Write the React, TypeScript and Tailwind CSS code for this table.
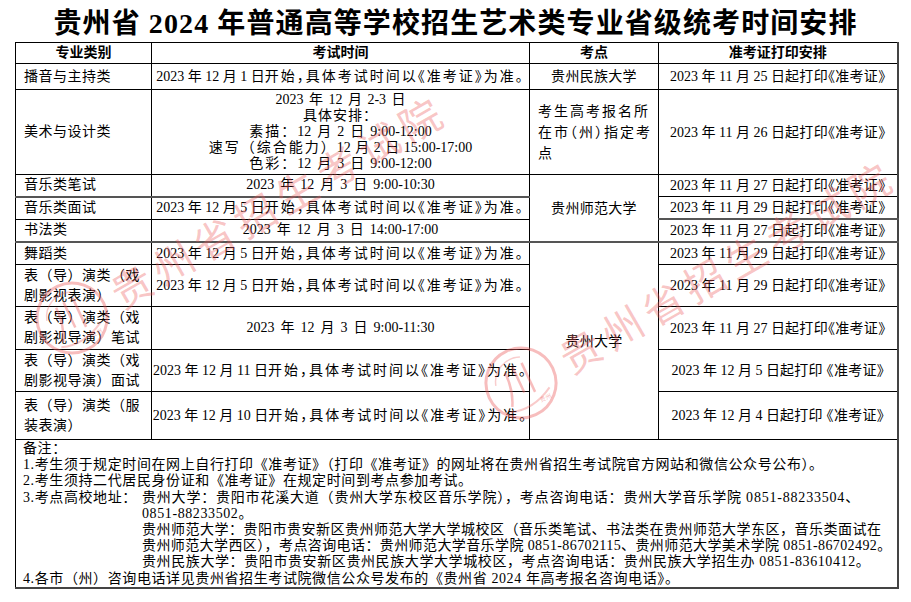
import React from "react";

const c1 = "border border-black px-[8px] text-left align-middle tracking-[0.5px] leading-[20px]";
const c2 = "border border-black px-0 text-center align-middle whitespace-nowrap leading-[16px]";
const c3 = "border border-black px-[8px] text-center align-middle tracking-[0.3px] leading-[21px]";
const c4 = "border border-black px-0 text-center align-middle whitespace-nowrap [font-feature-settings:'halt']";
const th = "border border-black text-center align-middle font-bold text-[14px] leading-[20px]";

function Long({ d }: { d: string }) {
  return (
    <span className="[font-feature-settings:'halt']">
      {d}
      <span className="tracking-[2px]">开始，具体考试时间以《准考证》为准。</span>
    </span>
  );
}

function P4({ d, sp }: { d: string; sp?: boolean }) {
  return (
    <span>
      {d}
      <span className="tracking-[0.3px]">{sp ? "起打印 《准考证》" : "起打印《准考证》"}</span>
    </span>
  );
}

function Watermark({ x, y }: { x: number; y: number }) {
  const red = "rgb(236,90,90)";
  return (
    <g>
      <g transform={`translate(${x - 41} ${y + 23}) rotate(-25)`}>
        <circle r="35" fill="none" stroke={red} strokeOpacity="0.4" strokeWidth="3" />
        <path d="M -24 -8 A 25 25 0 0 1 10 -24" fill="none" stroke={red} strokeOpacity="0.3" strokeWidth="1.5" />
        <path d="M -10 -16 Q -10 4 -18 18" fill="none" stroke={red} strokeOpacity="0.4" strokeWidth="2.5" />
        <path d="M -1 -18 L -1 10" fill="none" stroke={red} strokeOpacity="0.4" strokeWidth="2.5" />
        <path d="M 9 -18 L 9 14" fill="none" stroke={red} strokeOpacity="0.4" strokeWidth="2.5" />
        <path d="M -22 22 Q 0 30 24 16" fill="none" stroke={red} strokeOpacity="0.32" strokeWidth="2" />
        <text x="10" y="26" fontSize="6" fill={red} fillOpacity="0.45" fontFamily="Noto Sans CJK SC">贵州</text>
      </g>
      <text
        x={x}
        y={y}
        transform={`rotate(-30 ${x} ${y})`}
        dominantBaseline="central"
        fontSize="41"
        letterSpacing="6.5"
        fontFamily="Noto Sans CJK SC"
        fontWeight="400"
        fill={red}
        fillOpacity="0.36"
      >
        贵州省招生考试院
      </text>
    </g>
  );
}

export default function App() {
  return (
    <div className="relative w-[911px] h-[602px] overflow-hidden bg-white text-black font-['Liberation_Serif','Noto_Sans_CJK_SC',serif]">
      <div className="h-[42px] pt-[8px] text-center text-[28px] font-bold leading-[32px] tracking-[1.1px] whitespace-nowrap">
        贵州省 2024 年普通高等学校招生艺术类专业省级统考时间安排
      </div>
      <table className="ml-[15px] w-[882px] table-fixed border-collapse border-r-2 border-b-2 border-[#444] text-[14px]">
        <colgroup>
          <col className="w-[136px]" />
          <col className="w-[378px]" />
          <col className="w-[129px]" />
          <col className="w-[239px]" />
        </colgroup>
        <tbody>
          <tr className="h-[21px]">
            <th className={th}>专业类别</th>
            <th className={th}>考试时间</th>
            <th className={th}>考点</th>
            <th className={th}>准考证打印安排</th>
          </tr>
          <tr className="h-[26px]">
            <td className={c1}>播音与主持类</td>
            <td className={c2}><Long d="2023 年 12 月 1 日" /></td>
            <td className={c3}>贵州民族大学</td>
            <td className={c4}><P4 d="2023 年 11 月 25 日" /></td>
          </tr>
          <tr className="h-[85px]">
            <td className={c1}>美术与设计类</td>
            <td className={c2}>
              <div className="[word-spacing:2px]">2023 年 12 月 2-3 日</div>
              <div className="tracking-[1px]">具体安排：</div>
              <div className="[word-spacing:2.5px]"><span className="tracking-[2px]">素描：</span>12 月 2 日 9:00-12:00</div>
              <div className="[word-spacing:1px]"><span className="tracking-[2px]">速写（综合能力）</span>12 月 2 日 15:00-17:00</div>
              <div className="[word-spacing:2.5px]"><span className="tracking-[2px]">色彩：</span>12 月 3 日 9:00-12:00</div>
            </td>
            <td className="border border-black pl-[8px] pr-0 text-left align-middle leading-[21px] tracking-[2px] whitespace-nowrap [font-feature-settings:'halt']">
              考生高考报名所<br />在市（州）指定考<br />点
            </td>
            <td className={c4}><P4 d="2023 年 11 月 26 日" /></td>
          </tr>
          <tr className="h-[22px]">
            <td className={c1}>音乐类笔试</td>
            <td className={c2}><span className="[word-spacing:2.5px]">2023 年 12 月 3 日 9:00-10:30</span></td>
            <td className={c3} rowSpan={3}>贵州师范大学</td>
            <td className={c4}><P4 d="2023 年 11 月 27 日" /></td>
          </tr>
          <tr className="h-[21px]">
            <td className={`${c1} border-t-2 border-t-[#555]`}>音乐类面试</td>
            <td className={`${c2} border-t-2 border-t-[#555]`}><Long d="2023 年 12 月 5 日" /></td>
            <td className={c4}><P4 d="2023 年 11 月 29 日" /></td>
          </tr>
          <tr className="h-[22px]">
            <td className={c1}>书法类</td>
            <td className={c2}><span className="[word-spacing:2.5px]">2023 年 12 月 3 日 14:00-17:00</span></td>
            <td className={`${c4} border-t-2 border-t-[#555]`}><P4 d="2023 年 11 月 27 日" /></td>
          </tr>
          <tr className="h-[22px]">
            <td className={`${c1} border-t-2 border-t-[#555]`}>舞蹈类</td>
            <td className={`${c2} border-t-2 border-t-[#555]`}><Long d="2023 年 12 月 5 日" /></td>
            <td className={`${c3} border-t-2 border-t-[#555]`} rowSpan={5}>贵州大学</td>
            <td className={`${c4} border-t-2 border-t-[#555]`}><P4 d="2023 年 11 月 29 日" /></td>
          </tr>
          <tr className="h-[42px]">
            <td className={c1}>表（导）演类（戏<br />剧影视表演）</td>
            <td className={c2}><Long d="2023 年 12 月 5 日" /></td>
            <td className={c4}><P4 d="2023 年 11 月 29 日" /></td>
          </tr>
          <tr className="h-[43px]">
            <td className={c1}>表（导）演类（戏<br />剧影视导演）笔试</td>
            <td className={c2}><span className="[word-spacing:2.5px]">2023 年 12 月 3 日 9:00-11:30</span></td>
            <td className={c4}><P4 d="2023 年 11 月 27 日" /></td>
          </tr>
          <tr className="h-[42px]">
            <td className={c1}>表（导）演类（戏<br />剧影视导演）面试</td>
            <td className={c2}><Long d="2023 年 12 月 11 日" /></td>
            <td className={c4}><P4 d="2023 年 12 月 5 日" sp /></td>
          </tr>
          <tr className="h-[48px]">
            <td className={c1}>表（导）演类（服<br />装表演）</td>
            <td className={c2}><Long d="2023 年 12 月 10 日" /></td>
            <td className={c4}><P4 d="2023 年 12 月 4 日" sp /></td>
          </tr>
          <tr className="h-[148px]">
            <td colSpan={4} className="border border-black px-[7px] pt-[1px] pb-0 align-top text-[14px] leading-[16.2px] tracking-[0.6px] whitespace-nowrap">
              <div>备注：</div>
              <div>1.考生须于规定时间在网上自行打印《准考证》（打印《准考证》的网址将在贵州省招生考试院官方网站和微信公众号公布）。</div>
              <div>2.考生须持二代居民身份证和《准考证》在规定时间到考点参加考试。</div>
              <div className="flex">
                <div className="w-[119px] shrink-0">3.考点高校地址：</div>
                <div>
                  <div className="tracking-[0.8px]">贵州大学：贵阳市花溪大道（贵州大学东校区音乐学院），考点咨询电话：贵州大学音乐学院 0851-88233504、</div>
                  <div>0851-88233502。</div>
                  <div className="tracking-[0.5px]">贵州师范大学：贵阳市贵安新区贵州师范大学大学城校区（音乐类笔试、书法类在贵州师范大学东区，音乐类面试在</div>
                  <div className="tracking-[0.4px]">贵州师范大学西区），考点咨询电话：贵州师范大学音乐学院 0851-86702115、贵州师范大学美术学院 0851-86702492。</div>
                  <div>贵州民族大学：贵阳市贵安新区贵州民族大学大学城校区，考点咨询电话：贵州民族大学招生办 0851-83610412。</div>
                </div>
              </div>
              <div>4.各市（州）咨询电话详见贵州省招生考试院微信公众号发布的《贵州省 2024 年高考报名咨询电话》。</div>
            </td>
          </tr>
        </tbody>
      </table>
      <svg className="pointer-events-none absolute inset-0" width="911" height="602" viewBox="0 0 911 602">
        <Watermark x={113} y={295} />
        <Watermark x={562} y={360} />
      </svg>
    </div>
  );
}
